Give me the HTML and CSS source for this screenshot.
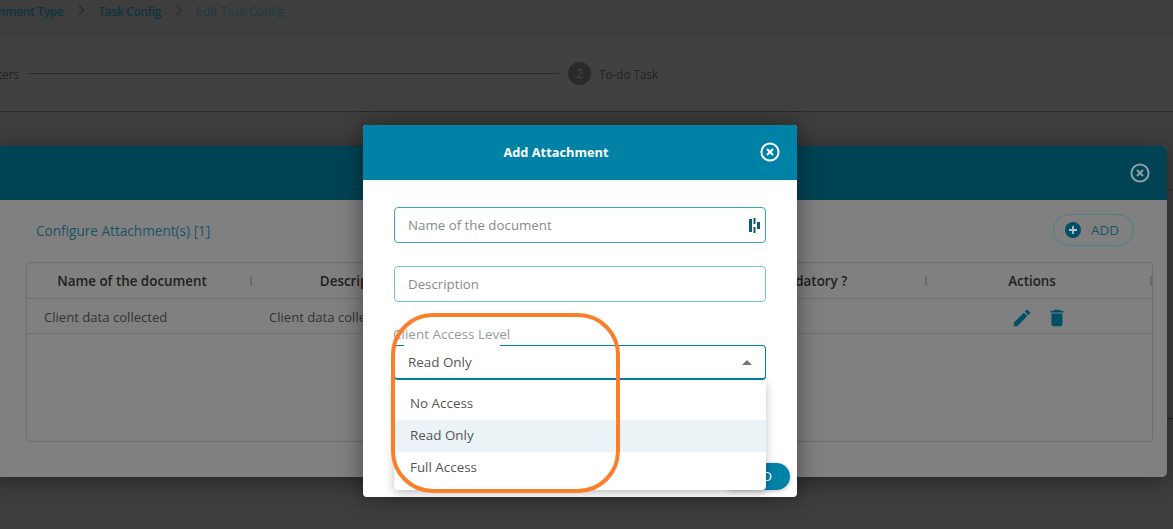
FILE: index.html
```html
<!DOCTYPE html>
<html lang="en">
<head>
    <meta charset="UTF-8">
    <meta name="viewport" content="width=device-width, initial-scale=1.0">
    <title>Edit Task Config</title>
    <link rel="stylesheet" href="styles.css">
</head>
<body>

    <!-- Page behind the dialogs -->
    <div class="page">
        <div class="crumbs">
            <span class="crumb">Assignment Type</span>
            <svg class="crumb-arrow" viewBox="0 0 8 12"><path d="M1.5 1l5 5-5 5" /></svg>
            <span class="crumb">Task Config</span>
            <svg class="crumb-arrow" viewBox="0 0 8 12"><path d="M1.5 1l5 5-5 5" /></svg>
            <span class="crumb crumb-last">Edit Task Config</span>
        </div>
        <div class="stepper">
            <span class="step-text step-first">Parameters</span>
            <span class="step-line"></span>
            <span class="step-num">2</span>
            <span class="step-text">To-do Task</span>
        </div>
        <div class="page-row page-row-top"></div>
        <div class="page-row page-row-main"></div>
    </div>

    <!-- Configure Attachments dialog -->
    <div class="back-dialog">
        <div class="back-head">
            <svg class="close-icon back-close" viewBox="0 0 20 20">
                <circle cx="10" cy="10" r="8.6" />
                <path d="M7 7l6 6M13 7l-6 6" />
            </svg>
        </div>
        <div class="back-body">
            <div class="back-top">
                <span class="back-title">Configure Attachment(s) [1]</span>
                <span class="add-btn">
                    <svg class="add-icon" viewBox="0 0 18 18">
                        <circle cx="9" cy="9" r="8" />
                        <path d="M9 5v8M5 9h8" />
                    </svg>
                    ADD
                </span>
            </div>
            <div class="grid">
                <div class="grid-head">
                    <div class="th">Name of the document</div>
                    <div class="th">Description</div>
                    <div class="th">Client Access Level</div>
                    <div class="th">Mandatory ?</div>
                    <div class="th">Actions</div>
                </div>
                <div class="grid-row">
                    <div class="td">Client data collected</div>
                    <div class="td">Client data collected</div>
                    <div class="td">Read Only</div>
                    <div class="td">Yes</div>
                    <div class="td td-actions">
                        <svg class="action-icon" viewBox="0 0 24 24"><path d="M3 17.25V21h3.75L17.81 9.94l-3.75-3.75L3 17.25zM20.71 7.04a1 1 0 0 0 0-1.41l-2.34-2.34a1 1 0 0 0-1.41 0l-1.83 1.83 3.75 3.75 1.83-1.83z" /></svg>
                        <svg class="action-icon" viewBox="0 0 24 24"><path d="M6 19c0 1.1.9 2 2 2h8c1.1 0 2-.9 2-2V7H6v12zM19 4h-3.5l-1-1h-5l-1 1H5v2h14V4z" /></svg>
                    </div>
                </div>
            </div>
        </div>
    </div>

    <!-- Add Attachment dialog -->
    <div class="modal">
        <div class="modal-head">
            <span class="modal-title">Add Attachment</span>
            <svg class="close-icon modal-close" viewBox="0 0 20 20">
                <circle cx="10" cy="10" r="8.6" />
                <path d="M7 7l6 6M13 7l-6 6" />
            </svg>
        </div>
        <div class="modal-body">
            <div class="input input-first">
                <span>Name of the document</span>
                <svg class="pw-icon" viewBox="0 0 11 15">
                    <path d="M0 1h3v13H0zM4.500 0h2v6h-2zM4.500 9h2v6h-2zM8 4h3v7H8z" />
                </svg>
            </div>
            <div class="input input-second"><span>Description</span></div>
            <div class="select-field">
                <label class="select-label">Client Access Level</label>
                <span class="select-notch"></span>
                <div class="select-box">
                    <span>Read Only</span>
                    <span class="select-caret"></span>
                </div>
                <ul class="options">
                    <li>No Access</li>
                    <li class="active">Read Only</li>
                    <li>Full Access</li>
                </ul>
            </div>
            <div class="modal-foot">
                <span class="save-btn">ADD</span>
            </div>
        </div>
    </div>

    <!-- Hand drawn highlight -->
    <div class="highlight"></div>

</body>
</html>
```

FILE: styles.css
```css
/* Edit Task Config, dimmed page with two dialogs */
html, body {
    height: 100%;
}

body {
    margin: 0;
    height: 529px;
    overflow: hidden;
    position: relative;
    background-color: #3c3c3c;
    font-family: 'Open Sans', 'Liberation Sans', sans-serif;
    font-size: 14px;
    color: #333;
}

/* Page behind */
.page {
    height: 529px;
    background-color: #3e3e3e;
}

.crumbs {
    display: flex;
    align-items: center;
    height: 38px;
    padding-bottom: 15px;
    box-sizing: border-box;
    margin-left: -30px;
    font-size: 12px;
    letter-spacing: -0.35px;
}

.crumb {
    font-weight: 600;
    color: #0f3440;
}

.crumb-last {
    font-weight: 400;
    letter-spacing: 0;
    color: #1d3a44;
}

.crumb-arrow {
    width: 8px;
    height: 12px;
    margin: 0 13px 4px 14px;
    fill: none;
    stroke: #222;
    stroke-width: 1;
}

.stepper {
    display: flex;
    align-items: center;
    height: 74px;
    padding-bottom: 2px;
    background-color: #414141;
    border-bottom: 1px solid #2c2c2c;
    box-sizing: border-box;
    margin-left: -46px;
    font-size: 11.700px;
}

.step-text {
    color: #222;
}

.step-first {
    width: 65px;
    text-align: right;
}

.step-line {
    width: 531px;
    height: 1px;
    margin: 0 9px;
    background-color: #2b2b2b;
}

.step-num {
    width: 23px;
    height: 23px;
    margin-right: 8px;
    border-radius: 50%;
    background-color: #2a2a2a;
    color: #444;
    line-height: 23px;
    text-align: center;
}

.page-row {
    box-sizing: border-box;
    border-bottom: 1px solid #333;
}

.page-row-top {
    height: 78px;
}

.page-row-main {
    height: 229px;
    border-bottom-color: #222;
}

/* Configure Attachments dialog */
.back-dialog {
    position: absolute;
    top: 146px;
    left: -12px;
    width: 1179px;
    height: 331px;
    border-radius: 5px;
    background-color: #808080;
    box-shadow: 0 4px 22px rgba(0, 0, 0, 0.4);
    overflow: hidden;
}

.back-head {
    display: flex;
    justify-content: flex-end;
    align-items: center;
    height: 54px;
    padding-right: 17px;
    background-color: #004355;
    box-sizing: border-box;
}

.close-icon {
    width: 20px;
    height: 20px;
    fill: none;
    stroke-width: 2;
}

.back-close {
    stroke: #8c9ea3;
}

.back-body {
    padding: 14px 14px 0 38px;
}

.back-top {
    display: flex;
    justify-content: space-between;
    align-items: center;
    height: 32px;
    padding-left: 10px;
    padding-right: 19px;
}

.back-title {
    color: #1a5365;
    font-size: 13.600px;
}

.add-btn {
    display: flex;
    align-items: center;
    gap: 9px;
    width: 81px;
    height: 32px;
    padding-left: 10px;
    box-sizing: border-box;
    border: 1px solid #4f7e8b;
    border-radius: 16px;
    color: #1a5365;
    font-size: 13.500px;
}

.add-icon {
    width: 18px;
    height: 18px;
}

.add-icon circle {
    fill: #004f66;
}

.add-icon path {
    stroke: #b5c3c7;
    stroke-width: 1.8;
    fill: none;
}

.grid {
    margin-top: 16px;
    height: 180px;
    box-sizing: border-box;
    border: 1px solid #6d6d6d;
    border-radius: 3px;
}

.grid-head,
.grid-row {
    display: grid;
    grid-template-columns: repeat(5, 1fr);
    align-items: center;
    border-bottom: 1px solid #707070;
}

.grid-head {
    height: 35px;
}

.grid-row {
    height: 34px;
}

.th {
    position: relative;
    padding-right: 15px;
    font-weight: 600;
    font-size: 13.400px;
    color: #212121;
    text-align: center;
}

.th::after {
    content: "";
    position: absolute;
    top: 4px;
    right: 0;
    width: 2px;
    height: 10px;
    background-color: #6a6a6a;
}

.td {
    padding-left: 17px;
    padding-top: 2px;
    font-size: 13.100px;
    color: #333;
}

.td-actions {
    display: flex;
    gap: 13px;
    padding-left: 84px;
    padding-top: 4px;
}

.action-icon {
    width: 22px;
    height: 22px;
    fill: #004f66;
}

/* Add Attachment dialog */
.modal {
    position: absolute;
    top: 125px;
    left: 363px;
    width: 434px;
    height: 372px;
    border-radius: 4px;
    background-color: #fff;
    box-shadow: 0 0 24px rgba(0, 0, 0, 0.45);
}

.modal-head {
    position: relative;
    display: flex;
    justify-content: center;
    align-items: center;
    height: 55px;
    border-radius: 4px 4px 0 0;
    background-color: #0081a6;
}

.modal-title {
    margin-right: 48px;
    margin-bottom: 2px;
    font-weight: 700;
    font-size: 12.800px;
    color: #fff;
}

.modal-close {
    position: absolute;
    top: 17px;
    right: 17px;
    stroke: #fff;
}

.modal-body {
    padding: 27px 31px 0;
}

.input {
    display: flex;
    justify-content: space-between;
    align-items: center;
    height: 36px;
    padding: 0 5px 0 13px;
    box-sizing: border-box;
    border: 1px solid #3aa5c3;
    border-radius: 4px;
    color: #8a8a8a;
    font-size: 13.300px;
}

.input-second {
    margin-top: 23px;
    border-color: #74bfd0;
}

.pw-icon {
    width: 11px;
    height: 15px;
    fill: #0f5d73;
}

.select-field {
    position: relative;
    margin-top: 43px;
}

.select-label {
    position: absolute;
    top: -20px;
    left: -1px;
    font-size: 13.500px;
    color: #999;
}

.select-notch {
    position: absolute;
    top: 0;
    left: 10px;
    width: 96px;
    height: 2px;
    background-color: #fff;
}

.select-box {
    display: flex;
    justify-content: space-between;
    align-items: center;
    height: 35px;
    padding: 0 13px;
    box-sizing: border-box;
    border: 1px solid #0081a6;
    border-bottom-width: 2px;
    border-radius: 4px;
    color: #555;
    font-size: 13.400px;
}

.select-caret {
    width: 0;
    height: 0;
    border-left: 5px solid transparent;
    border-right: 5px solid transparent;
    border-bottom: 5px solid #777;
}

.options {
    position: absolute;
    top: 35px;
    left: 0;
    z-index: 2;
    width: 100%;
    margin: 0;
    padding: 8px 0 6px;
    list-style: none;
    border-radius: 0 0 4px 4px;
    background-color: #fff;
    box-shadow: 0 3px 10px rgba(0, 0, 0, 0.25);
}

.options li {
    height: 32px;
    padding-left: 16px;
    line-height: 31px;
    font-size: 13.400px;
    color: #555;
}

.options .active {
    background-color: #ebf3f6;
}

.modal-foot {
    display: flex;
    justify-content: flex-end;
    margin: 83px -24px 0 0;
}

.save-btn {
    width: 70px;
    height: 27px;
    padding-right: 18px;
    box-sizing: border-box;
    border-radius: 14px;
    background-color: #0081a6;
    color: #fff;
    line-height: 27px;
    text-align: right;
    font-size: 13.500px;
    box-shadow: 0 1px 4px rgba(0, 0, 0, 0.25);
}

/* Orange marker drawn on the screenshot */
.highlight {
    position: absolute;
    top: 313px;
    left: 391px;
    z-index: 3;
    width: 229px;
    height: 180px;
    box-sizing: border-box;
    border: 4px solid #f97f2a;
    border-radius: 42px;
}
```
